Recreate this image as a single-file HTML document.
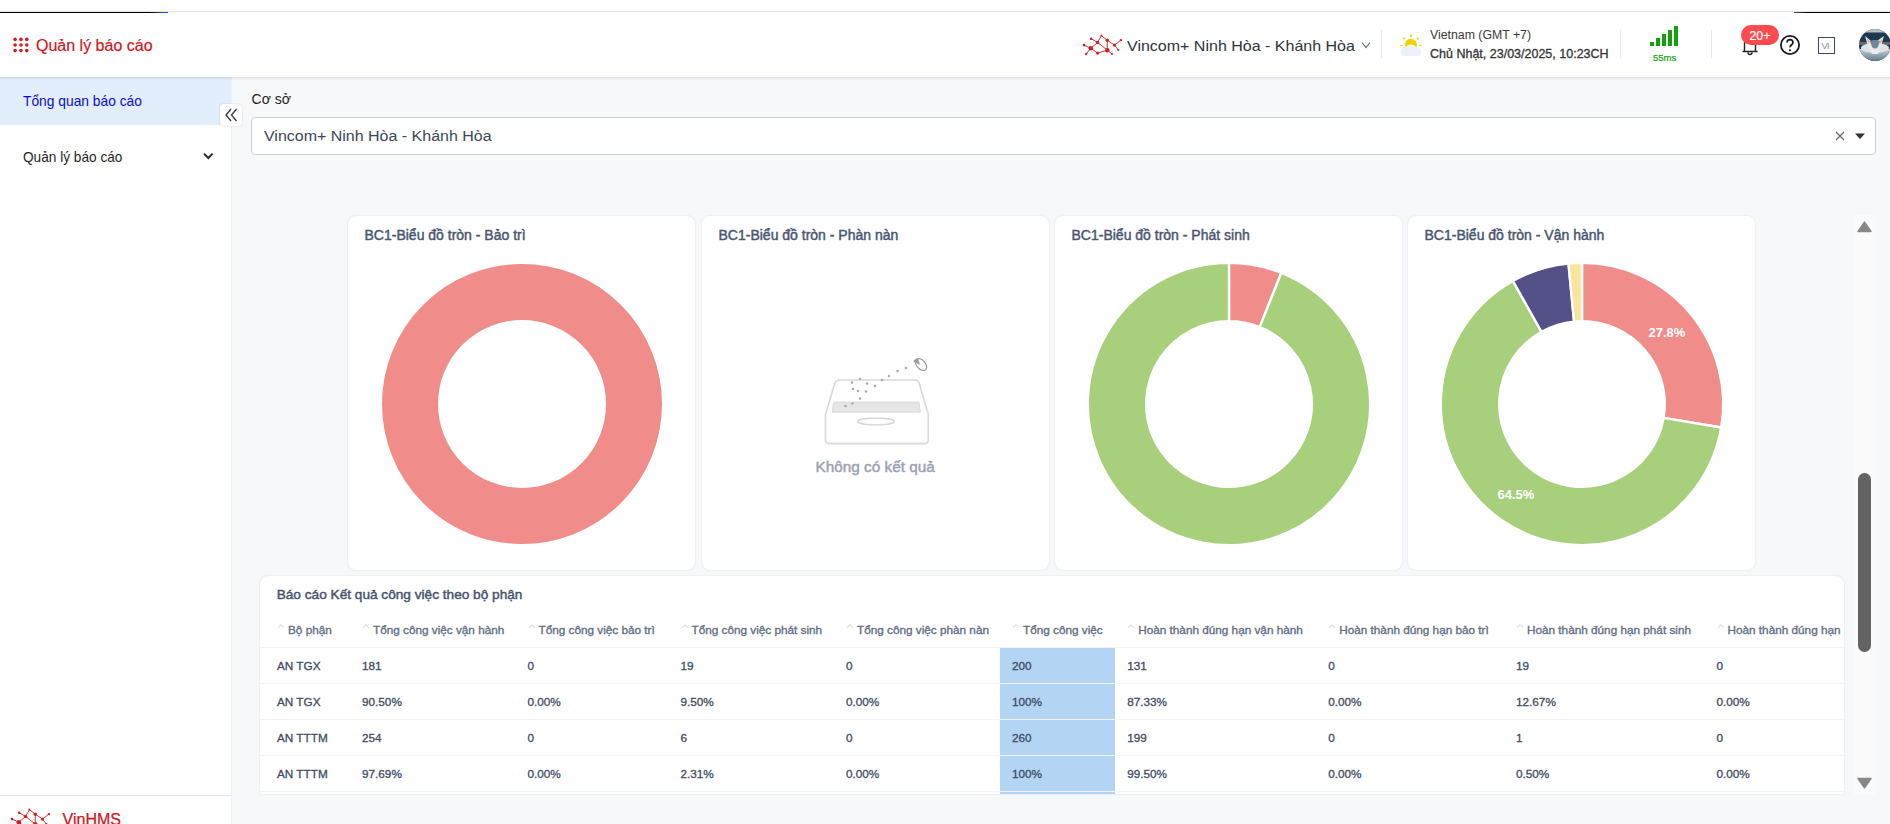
<!DOCTYPE html>
<html><head><meta charset="utf-8">
<style>
*{box-sizing:border-box;margin:0;padding:0}
html,body{width:1890px;height:824px;overflow:hidden;background:#f7f8fa;font-family:"Liberation Sans",sans-serif;position:relative}
.a{position:absolute;white-space:nowrap}
.t{position:absolute;white-space:nowrap;line-height:1}
</style></head><body>

<!-- top strip -->
<div class="a" style="left:0;top:0;width:1890px;height:13px;background:#fff"></div>
<div class="a" style="left:0;top:11.2px;width:1890px;height:1.3px;background:#e3e4e3"></div>
<div class="a" style="left:0;top:11.6px;width:168px;height:1.6px;background:linear-gradient(90deg,#000 0,#000 148px,#444 161px,#1556e0 162px,#1556e0 168px)"></div>
<div class="a" style="left:1794px;top:12px;width:96px;height:1.5px;background:linear-gradient(90deg,#555 0,#000 14px)"></div>

<!-- header -->
<div id="header" class="a" style="left:0;top:13px;width:1890px;height:64px;background:#fff"></div>


<!-- header content -->
<svg class="a" style="left:0;top:0" width="40" height="70" viewBox="0 0 40 70">
<g fill="#d11a1f">
<circle cx="15.1" cy="39.4" r="1.8"/><circle cx="21" cy="39.4" r="1.8"/><circle cx="26.8" cy="39.4" r="1.8"/>
<circle cx="15.1" cy="45" r="1.8"/><circle cx="21" cy="45" r="1.8"/><circle cx="26.8" cy="45" r="1.8"/>
<circle cx="15.1" cy="50.6" r="1.8"/><circle cx="21" cy="50.6" r="1.8"/><circle cx="26.8" cy="50.6" r="1.8"/>
</g></svg>
<div class="t" id="hdrTitle" style="left:36px;top:37.6px;font-size:16px;color:#d0161c;-webkit-text-stroke:0.2px #d0161c">Quản lý báo cáo</div>

<svg class="a" style="left:1082px;top:34px" width="42" height="23" viewBox="0 0 42 23">
<g stroke="#d11f22" stroke-width="0.9" fill="none">
<path d="M2 11.1L8.8 14.3L4.2 20M8.8 14.3L15.6 8.4L9.1 4.7M15.6 8.4L19.4 1.6L25.3 6.2L25.3 16.2L15.6 8.4M8.8 14.3L15.6 19.1L25.3 16.2L30 20M25.3 6.2L32.5 11.1L38.9 6.1M32.5 11.1L36.3 16"/>
</g>
<g fill="#d11f22">
<circle cx="2" cy="11.1" r="1.3"/><circle cx="8.8" cy="14.3" r="2.3"/><circle cx="4.2" cy="20" r="1.2"/>
<circle cx="9.1" cy="4.7" r="1.3"/><circle cx="15.6" cy="8.4" r="1.7"/><circle cx="19.4" cy="1.6" r="1"/>
<circle cx="25.3" cy="6.2" r="1.7"/><circle cx="15.6" cy="19.1" r="1.6"/><circle cx="25.3" cy="16.2" r="2.2"/>
<circle cx="30" cy="20" r="1.1"/><circle cx="32.5" cy="11.1" r="1.6"/><circle cx="38.9" cy="6.1" r="1.2"/>
<circle cx="36.3" cy="16" r="1"/>
</g></svg>
<div class="t" id="hdrSite" style="left:1127px;top:37.6px;font-size:15px;color:#2d3540;transform-origin:0 0;transform:scaleX(1.067)">Vincom+ Ninh Hòa - Khánh Hòa</div>
<svg class="a" style="left:1358px;top:38px" width="16" height="14" viewBox="0 0 16 14"><path d="M4 4.5L8 9.5L12 4.5" stroke="#5a6270" stroke-width="1.1" fill="none"/></svg>
<div class="a" style="left:1381px;top:30px;width:1px;height:28px;background:#e6e8eb"></div>

<svg class="a" style="left:1398px;top:33px" width="26" height="26" viewBox="0 0 26 26">
<g fill="#f3d000">
<circle cx="13" cy="11.8" r="6"/>
<rect x="12" y="1.9" width="2" height="1.9"/>
<circle cx="5.9" cy="5.6" r="1"/><circle cx="20" cy="5.5" r="1"/>
<ellipse cx="3.4" cy="12.5" rx="1.3" ry="0.7"/><ellipse cx="22.6" cy="12.5" rx="1.3" ry="0.7"/>
</g>
<circle cx="13" cy="17.6" r="5.4" fill="#eef2f8" stroke="#fff" stroke-width="1.2"/>
<rect x="2.5" y="14.6" width="21" height="8.3" rx="4.2" fill="#eef2f8"/>
</svg>
<div class="t" id="hdrTz" style="left:1430px;top:29.35px;font-size:12.3px;color:#3a3a3a">Vietnam (GMT +7)</div>
<div class="t" id="hdrDate" style="left:1430px;top:48.3px;font-size:12.5px;-webkit-text-stroke:0.3px #333;color:#333">Chủ Nhật, 23/03/2025, 10:23CH</div>
<div class="a" style="left:1620px;top:30px;width:1px;height:28px;background:#e6e8eb"></div>

<div class="a" style="left:1650px;top:42px;width:4px;height:4px;background:#13a10e"></div>
<div class="a" style="left:1656px;top:38px;width:4px;height:8px;background:#13a10e"></div>
<div class="a" style="left:1662px;top:34px;width:4px;height:12px;background:#13a10e"></div>
<div class="a" style="left:1668px;top:30px;width:4px;height:16px;background:#13a10e"></div>
<div class="a" style="left:1674px;top:26px;width:4px;height:20px;background:#13a10e"></div>
<div class="t" id="hdrMs" style="left:1653px;top:53px;font-size:9.5px;color:#13a10e;-webkit-text-stroke:0.2px #13a10e">55ms</div>
<div class="a" style="left:1711px;top:30px;width:1px;height:28px;background:#e6e8eb"></div>

<svg class="a" style="left:1738px;top:30px" width="24" height="28" viewBox="0 0 24 28">
<path d="M6.5 21.5V12.5A5.5 5.5 0 0 1 17.5 12.5V21.5M4.5 21.5H19.5M10 22.5A2 2 0 0 0 14 22.5" stroke="#222" stroke-width="1.4" fill="none"/>
</svg>
<div class="a" style="left:1741px;top:25px;width:37.5px;height:20px;border-radius:10px;background:#ff4a4f"></div>
<div class="t" id="hdrBadge" style="left:1749.5px;top:29.8px;font-size:12.3px;color:#fff;-webkit-text-stroke:0.2px #fff">20+</div>
<svg class="a" style="left:1778px;top:33px" width="24" height="24" viewBox="0 0 24 24">
<circle cx="12" cy="12" r="9.1" stroke="#1c1c1c" stroke-width="1.8" fill="none"/>
<path d="M9 9.6A3 3 0 0 1 15 9.6C15 11.6 12 12 12 14.3" stroke="#1c1c1c" stroke-width="1.7" fill="none"/>
<circle cx="12" cy="17.3" r="1.1" fill="#1c1c1c"/>
</svg>
<div class="a" style="left:1818px;top:37px;width:17px;height:17px;border:1.4px solid #3d4b5e"></div>
<div class="t" style="left:1821.5px;top:40.5px;font-size:9.5px;color:#8f949b;letter-spacing:-0.8px">VI</div>
<svg class="a" style="left:1859px;top:29px" width="32" height="32" viewBox="0 0 32 32">
<defs><clipPath id="av"><circle cx="16" cy="16" r="16"/></clipPath>
<linearGradient id="avb" x1="0" y1="0" x2="0" y2="1"><stop offset="0" stop-color="#c9d2d8"/><stop offset="1" stop-color="#5f7a8c"/></linearGradient></defs>
<g clip-path="url(#av)">
<rect x="0" y="0" width="32" height="32" fill="#1f3850"/>
<rect x="0" y="0" width="32" height="3.5" fill="#b7bfc3"/>
<rect x="0" y="13" width="32" height="3" fill="#6e6c6a"/>
<rect x="0" y="20" width="32" height="12" fill="url(#avb)"/>
<ellipse cx="16" cy="19" rx="14" ry="5" fill="#dfe3e7"/>
<path d="M6 7L12 12L15 20L18 12L25 7L22 17L19 25H13L9 17Z" fill="#ecebec"/>
<path d="M7.5 9L11 12.5L10 15Z" fill="#e8a48c"/>
<path d="M24 9L20.5 12.5L21.5 15Z" fill="#e8a48c"/>
<path d="M11 12Q16 10 21 12L19 18Q16 21 13 18Z" fill="#6f889a"/>
</g></svg>
<!-- sidebar -->
<div id="sidebar" class="a" style="left:0;top:77px;width:232px;height:747px;background:#fff;border-right:1px solid #eef0f3"></div>


<div class="a" style="left:0;top:77px;width:231px;height:48px;background:#e3eefc"></div>
<div class="t" style="left:23.4px;top:94px;font-size:14.3px;color:#0b0bcf;transform-origin:0 0;transform:scaleX(0.965)">Tổng quan báo cáo</div>
<div class="t" style="left:23.4px;top:149.8px;font-size:14.3px;color:#1f1f1f;transform-origin:0 0;transform:scaleX(0.955)">Quản lý báo cáo</div>
<svg class="a" style="left:200px;top:149px" width="16" height="14" viewBox="0 0 16 14"><path d="M4 4.6L8.3 9L12.6 4.6" stroke="#2a2a2a" stroke-width="2" fill="none"/></svg>
<div class="a" style="left:220px;top:104px;width:22px;height:22px;background:#fff;border-radius:4px;box-shadow:0 0 2px rgba(0,0,0,0.18)"></div>
<svg class="a" style="left:220px;top:104px" width="22" height="22" viewBox="0 0 22 22"><path d="M11 5L6 11L11 17M16.5 5L11.5 11L16.5 17" stroke="#333" stroke-width="1.3" fill="none"/></svg>
<div class="a" style="left:0;top:795px;width:231px;height:1px;background:#dfe5ee"></div>
<svg class="a" style="left:10px;top:808px" width="42" height="23" viewBox="0 0 42 23"><g stroke="#d11f22" stroke-width="0.9" fill="none">
<path d="M2 11.1L8.8 14.3L4.2 20M8.8 14.3L15.6 8.4L9.1 4.7M15.6 8.4L19.4 1.6L25.3 6.2L25.3 16.2L15.6 8.4M8.8 14.3L15.6 19.1L25.3 16.2L30 20M25.3 6.2L32.5 11.1L38.9 6.1M32.5 11.1L36.3 16"/>
</g>
<g fill="#d11f22">
<circle cx="2" cy="11.1" r="1.3"/><circle cx="8.8" cy="14.3" r="2.3"/><circle cx="4.2" cy="20" r="1.2"/>
<circle cx="9.1" cy="4.7" r="1.3"/><circle cx="15.6" cy="8.4" r="1.7"/><circle cx="19.4" cy="1.6" r="1"/>
<circle cx="25.3" cy="6.2" r="1.7"/><circle cx="15.6" cy="19.1" r="1.6"/><circle cx="25.3" cy="16.2" r="2.2"/>
<circle cx="30" cy="20" r="1.1"/><circle cx="32.5" cy="11.1" r="1.6"/><circle cx="38.9" cy="6.1" r="1.2"/>
<circle cx="36.3" cy="16" r="1"/>
</g></svg>
<div class="t" style="left:62.6px;top:811.5px;font-size:16px;color:#d0161c;-webkit-text-stroke:0.25px #d0161c">VinHMS</div>

<div class="a" style="left:0;top:77px;width:1890px;height:4px;background:linear-gradient(rgba(30,40,70,0.10),rgba(30,40,70,0.035) 50%,rgba(30,40,70,0))"></div>
<!-- main -->
<div id="main">
<div class="t" style="left:251.6px;top:91.9px;font-size:14px;color:#222">Cơ sở</div>
<div class="a" style="left:251px;top:117px;width:1625px;height:38px;background:#fff;border:1px solid #c8cfd9;border-radius:4px"></div>
<div class="t" style="left:264.4px;top:128.4px;font-size:15.5px;color:#3c4656;transform-origin:0 0;transform:scaleX(1.031)">Vincom+ Ninh Hòa - Khánh Hòa</div>
<svg class="a" style="left:1834px;top:130px" width="12" height="12" viewBox="0 0 12 12"><path d="M2 2L10 10M10 2L2 10" stroke="#666" stroke-width="1.2"/></svg>
<svg class="a" style="left:1854px;top:132px" width="12" height="8" viewBox="0 0 12 8"><path d="M1 1.5H11L6 7Z" fill="#333"/></svg>
<div class="a" style="left:1853px;top:215px;width:23px;height:579px;background:#fbfbfb"></div>
<div class="a" style="left:1858px;top:473px;width:13px;height:179px;background:#636363;border-radius:6.5px"></div>
<svg class="a" style="left:1856px;top:220px" width="17" height="14" viewBox="0 0 17 14"><path d="M8.5 2.2L15 11.5H2Z" fill="#878787" stroke="#878787" stroke-width="1.5" stroke-linejoin="round"/></svg>
<svg class="a" style="left:1856px;top:776px" width="17" height="14" viewBox="0 0 17 14"><path d="M2 2.5H15L8.5 11.8Z" fill="#878787" stroke="#878787" stroke-width="1.5" stroke-linejoin="round"/></svg>
<div class="a" style="left:348px;top:216px;width:347px;height:354px;background:#fff;border-radius:8px;box-shadow:0 0 2px rgba(20,30,60,0.14)"></div>
<div class="t" style="left:364.5px;top:227.8px;font-size:14px;-webkit-text-stroke:0.45px #4a5670;color:#4a5670">BC1-Biểu đồ tròn - Bảo trì</div>
<div class="a" style="left:702px;top:216px;width:347px;height:354px;background:#fff;border-radius:8px;box-shadow:0 0 2px rgba(20,30,60,0.14)"></div>
<div class="t" style="left:718.5px;top:227.8px;font-size:14px;-webkit-text-stroke:0.45px #4a5670;color:#4a5670">BC1-Biểu đồ tròn - Phàn nàn</div>
<div class="a" style="left:1055px;top:216px;width:347px;height:354px;background:#fff;border-radius:8px;box-shadow:0 0 2px rgba(20,30,60,0.14)"></div>
<div class="t" style="left:1071.5px;top:227.8px;font-size:14px;-webkit-text-stroke:0.45px #4a5670;color:#4a5670">BC1-Biểu đồ tròn - Phát sinh</div>
<div class="a" style="left:1408px;top:216px;width:347px;height:354px;background:#fff;border-radius:8px;box-shadow:0 0 2px rgba(20,30,60,0.14)"></div>
<div class="t" style="left:1424.5px;top:227.8px;font-size:14px;-webkit-text-stroke:0.45px #4a5670;color:#4a5670">BC1-Biểu đồ tròn - Vận hành</div>
<svg class="a" style="left:348px;top:216px" width="347" height="354"><circle cx="174" cy="188" r="112.0" stroke="#f08c8a" stroke-width="56" fill="none"/></svg>
<svg class="a" style="left:1055px;top:216px" width="347" height="354"><path d="M174.00 46.80A141.2 141.2 0 0 1 226.32 56.85L204.68 111.09A82.8 82.8 0 0 0 174.00 105.20Z" fill="#f08c8a" stroke="#fff" stroke-width="2.4" stroke-linejoin="miter"/><path d="M226.32 56.85A141.2 141.2 0 1 1 174.00 46.80L174.00 105.20A82.8 82.8 0 1 0 204.68 111.09Z" fill="#a8d07c" stroke="#fff" stroke-width="2.4" stroke-linejoin="miter"/></svg>
<svg class="a" style="left:1408px;top:216px" width="347" height="354"><path d="M174.00 46.80A141.2 141.2 0 0 1 313.22 211.55L255.64 201.81A82.8 82.8 0 0 0 174.00 105.20Z" fill="#f08c8a" stroke="#fff" stroke-width="2.4" stroke-linejoin="miter"/><path d="M313.22 211.55A141.2 141.2 0 1 1 104.90 64.86L133.48 115.79A82.8 82.8 0 1 0 255.64 201.81Z" fill="#a8d07c" stroke="#fff" stroke-width="2.4" stroke-linejoin="miter"/><path d="M104.90 64.86A141.2 141.2 0 0 1 160.47 47.45L166.06 105.58A82.8 82.8 0 0 0 133.48 115.79Z" fill="#545189" stroke="#fff" stroke-width="2.4" stroke-linejoin="miter"/><path d="M160.47 47.45A141.2 141.2 0 0 1 174.00 46.80L174.00 105.20A82.8 82.8 0 0 0 166.06 105.58Z" fill="#fbe49c" stroke="#fff" stroke-width="2.4" stroke-linejoin="miter"/></svg>
<div class="t" style="left:1648.5px;top:325.5px;font-size:13px;font-weight:700;color:#fff">27.8%</div>
<div class="t" style="left:1497.5px;top:488px;font-size:13px;font-weight:700;color:#fff">64.5%</div>
<svg class="a" style="left:800px;top:340px" width="160" height="120" viewBox="0 0 160 120">
<path d="M25.5 74.5L35 42.5Q36 40 39 40H115Q118 40 119 42.5L128.3 74.5V100Q128.3 103.6 124.7 103.6H29Q25.5 103.6 25.5 100Z" fill="#fff" stroke="#d9d9d9" stroke-width="1.6" stroke-linejoin="round"/>
<path d="M33.5 62H118.8L120.5 72.2H32.3Z" fill="#e6e6e6" stroke="#d6d6d6" stroke-width="0.8"/>
<ellipse cx="75.9" cy="81.5" rx="18.5" ry="3.3" fill="none" stroke="#d6d6d6" stroke-width="1.3"/>
<circle cx="45.5" cy="66" r="1.3" fill="#ababab"/><circle cx="52.5" cy="63.5" r="1.3" fill="#ababab"/><circle cx="60" cy="58.5" r="1.3" fill="#ababab"/><circle cx="58" cy="51" r="1.3" fill="#ababab"/><circle cx="53" cy="49" r="1.3" fill="#ababab"/><circle cx="52" cy="42.5" r="1.3" fill="#ababab"/><circle cx="60" cy="39" r="1.3" fill="#ababab"/><circle cx="67" cy="43.5" r="1.3" fill="#ababab"/><circle cx="66" cy="51.5" r="1.3" fill="#ababab"/><circle cx="75" cy="46" r="1.3" fill="#ababab"/><circle cx="82" cy="40" r="1.3" fill="#ababab"/><circle cx="89" cy="36" r="1.3" fill="#ababab"/><circle cx="97.5" cy="31" r="1.3" fill="#ababab"/><circle cx="106" cy="28" r="1.3" fill="#ababab"/>
<ellipse cx="121" cy="24.5" rx="4.3" ry="7" transform="rotate(-42 121 24.5)" fill="#fff" stroke="#9a9a9a" stroke-width="1.2"/>
<path d="M113.3 21.3Q115 18.6 118.3 19.2L120 25Z" fill="#9a9a9a"/>
</svg>
<div class="t" style="left:815.6px;top:459.4px;font-size:15.3px;-webkit-text-stroke:0.45px #9aa2b3;color:#9aa2b3">Không có kết quả</div>
<div class="a" style="left:260px;top:575.5px;width:1584px;height:218.5px;background:#fff;border-radius:8px 8px 0 0;box-shadow:0 0 2px rgba(20,30,60,0.14)"></div>
<div class="t" style="left:276.7px;top:588.2px;font-size:13.65px;-webkit-text-stroke:0.45px #46536b;color:#46536b">Báo cáo Kết quả công việc theo bộ phận</div>
<div class="a" style="left:260px;top:575.5px;width:1584px;height:218.5px;overflow:hidden"><div class="a" style="left:740px;top:72.5px;width:115px;height:146px;background:#b3d4f3"></div><svg class="a" style="left:17px;top:47px" width="8" height="6" viewBox="0 0 8 6"><path d="M1 4.8L4 1.6L7 4.8" stroke="#cfd3da" stroke-width="1" fill="none"/></svg><div class="t" style="left:28px;top:48.5px;font-size:11.75px;-webkit-text-stroke:0.35px #646e82;color:#646e82">Bộ phận</div><svg class="a" style="left:102px;top:47px" width="8" height="6" viewBox="0 0 8 6"><path d="M1 4.8L4 1.6L7 4.8" stroke="#cfd3da" stroke-width="1" fill="none"/></svg><div class="t" style="left:113px;top:48.5px;font-size:11.75px;-webkit-text-stroke:0.35px #646e82;color:#646e82">Tổng công việc vận hành</div><svg class="a" style="left:267.5px;top:47px" width="8" height="6" viewBox="0 0 8 6"><path d="M1 4.8L4 1.6L7 4.8" stroke="#cfd3da" stroke-width="1" fill="none"/></svg><div class="t" style="left:278.5px;top:48.5px;font-size:11.75px;-webkit-text-stroke:0.35px #646e82;color:#646e82">Tổng công việc bảo trì</div><svg class="a" style="left:420.5px;top:47px" width="8" height="6" viewBox="0 0 8 6"><path d="M1 4.8L4 1.6L7 4.8" stroke="#cfd3da" stroke-width="1" fill="none"/></svg><div class="t" style="left:431.5px;top:48.5px;font-size:11.75px;-webkit-text-stroke:0.35px #646e82;color:#646e82">Tổng công việc phát sinh</div><svg class="a" style="left:586px;top:47px" width="8" height="6" viewBox="0 0 8 6"><path d="M1 4.8L4 1.6L7 4.8" stroke="#cfd3da" stroke-width="1" fill="none"/></svg><div class="t" style="left:597px;top:48.5px;font-size:11.75px;-webkit-text-stroke:0.35px #646e82;color:#646e82">Tổng công việc phàn nàn</div><svg class="a" style="left:752px;top:47px" width="8" height="6" viewBox="0 0 8 6"><path d="M1 4.8L4 1.6L7 4.8" stroke="#cfd3da" stroke-width="1" fill="none"/></svg><div class="t" style="left:763px;top:48.5px;font-size:11.75px;-webkit-text-stroke:0.35px #646e82;color:#646e82">Tổng công việc</div><svg class="a" style="left:867.2px;top:47px" width="8" height="6" viewBox="0 0 8 6"><path d="M1 4.8L4 1.6L7 4.8" stroke="#cfd3da" stroke-width="1" fill="none"/></svg><div class="t" style="left:878.2px;top:48.5px;font-size:11.75px;-webkit-text-stroke:0.35px #646e82;color:#646e82">Hoàn thành đúng hạn vận hành</div><svg class="a" style="left:1068.2px;top:47px" width="8" height="6" viewBox="0 0 8 6"><path d="M1 4.8L4 1.6L7 4.8" stroke="#cfd3da" stroke-width="1" fill="none"/></svg><div class="t" style="left:1079.2px;top:48.5px;font-size:11.75px;-webkit-text-stroke:0.35px #646e82;color:#646e82">Hoàn thành đúng hạn bảo trì</div><svg class="a" style="left:1256px;top:47px" width="8" height="6" viewBox="0 0 8 6"><path d="M1 4.8L4 1.6L7 4.8" stroke="#cfd3da" stroke-width="1" fill="none"/></svg><div class="t" style="left:1267px;top:48.5px;font-size:11.75px;-webkit-text-stroke:0.35px #646e82;color:#646e82">Hoàn thành đúng hạn phát sinh</div><svg class="a" style="left:1456.5px;top:47px" width="8" height="6" viewBox="0 0 8 6"><path d="M1 4.8L4 1.6L7 4.8" stroke="#cfd3da" stroke-width="1" fill="none"/></svg><div class="t" style="left:1467.5px;top:48.5px;font-size:11.75px;-webkit-text-stroke:0.35px #646e82;color:#646e82">Hoàn thành đúng hạn phàn nàn</div><div class="a" style="left:0;top:71.5px;width:1584px;height:1px;background:#f2f3f5"></div><div class="a" style="left:0;top:107.5px;width:1584px;height:1px;background:#f2f3f5"></div><div class="a" style="left:0;top:143.5px;width:1584px;height:1px;background:#f2f3f5"></div><div class="a" style="left:0;top:179.5px;width:1584px;height:1px;background:#f2f3f5"></div><div class="a" style="left:0;top:215.5px;width:1584px;height:1px;background:#f2f3f5"></div><div class="t" style="left:17px;top:84.5px;font-size:11.75px;-webkit-text-stroke:0.3px #404c66;color:#404c66">AN TGX</div><div class="t" style="left:102px;top:84.5px;font-size:11.75px;-webkit-text-stroke:0.3px #404c66;color:#404c66">181</div><div class="t" style="left:267.5px;top:84.5px;font-size:11.75px;-webkit-text-stroke:0.3px #404c66;color:#404c66">0</div><div class="t" style="left:420.5px;top:84.5px;font-size:11.75px;-webkit-text-stroke:0.3px #404c66;color:#404c66">19</div><div class="t" style="left:586px;top:84.5px;font-size:11.75px;-webkit-text-stroke:0.3px #404c66;color:#404c66">0</div><div class="t" style="left:752px;top:84.5px;font-size:11.75px;-webkit-text-stroke:0.3px #404c66;color:#404c66">200</div><div class="t" style="left:867.2px;top:84.5px;font-size:11.75px;-webkit-text-stroke:0.3px #404c66;color:#404c66">131</div><div class="t" style="left:1068.2px;top:84.5px;font-size:11.75px;-webkit-text-stroke:0.3px #404c66;color:#404c66">0</div><div class="t" style="left:1256px;top:84.5px;font-size:11.75px;-webkit-text-stroke:0.3px #404c66;color:#404c66">19</div><div class="t" style="left:1456.5px;top:84.5px;font-size:11.75px;-webkit-text-stroke:0.3px #404c66;color:#404c66">0</div><div class="t" style="left:17px;top:120.5px;font-size:11.75px;-webkit-text-stroke:0.3px #404c66;color:#404c66">AN TGX</div><div class="t" style="left:102px;top:120.5px;font-size:11.75px;-webkit-text-stroke:0.3px #404c66;color:#404c66">90.50%</div><div class="t" style="left:267.5px;top:120.5px;font-size:11.75px;-webkit-text-stroke:0.3px #404c66;color:#404c66">0.00%</div><div class="t" style="left:420.5px;top:120.5px;font-size:11.75px;-webkit-text-stroke:0.3px #404c66;color:#404c66">9.50%</div><div class="t" style="left:586px;top:120.5px;font-size:11.75px;-webkit-text-stroke:0.3px #404c66;color:#404c66">0.00%</div><div class="t" style="left:752px;top:120.5px;font-size:11.75px;-webkit-text-stroke:0.3px #404c66;color:#404c66">100%</div><div class="t" style="left:867.2px;top:120.5px;font-size:11.75px;-webkit-text-stroke:0.3px #404c66;color:#404c66">87.33%</div><div class="t" style="left:1068.2px;top:120.5px;font-size:11.75px;-webkit-text-stroke:0.3px #404c66;color:#404c66">0.00%</div><div class="t" style="left:1256px;top:120.5px;font-size:11.75px;-webkit-text-stroke:0.3px #404c66;color:#404c66">12.67%</div><div class="t" style="left:1456.5px;top:120.5px;font-size:11.75px;-webkit-text-stroke:0.3px #404c66;color:#404c66">0.00%</div><div class="t" style="left:17px;top:156.5px;font-size:11.75px;-webkit-text-stroke:0.3px #404c66;color:#404c66">AN TTTM</div><div class="t" style="left:102px;top:156.5px;font-size:11.75px;-webkit-text-stroke:0.3px #404c66;color:#404c66">254</div><div class="t" style="left:267.5px;top:156.5px;font-size:11.75px;-webkit-text-stroke:0.3px #404c66;color:#404c66">0</div><div class="t" style="left:420.5px;top:156.5px;font-size:11.75px;-webkit-text-stroke:0.3px #404c66;color:#404c66">6</div><div class="t" style="left:586px;top:156.5px;font-size:11.75px;-webkit-text-stroke:0.3px #404c66;color:#404c66">0</div><div class="t" style="left:752px;top:156.5px;font-size:11.75px;-webkit-text-stroke:0.3px #404c66;color:#404c66">260</div><div class="t" style="left:867.2px;top:156.5px;font-size:11.75px;-webkit-text-stroke:0.3px #404c66;color:#404c66">199</div><div class="t" style="left:1068.2px;top:156.5px;font-size:11.75px;-webkit-text-stroke:0.3px #404c66;color:#404c66">0</div><div class="t" style="left:1256px;top:156.5px;font-size:11.75px;-webkit-text-stroke:0.3px #404c66;color:#404c66">1</div><div class="t" style="left:1456.5px;top:156.5px;font-size:11.75px;-webkit-text-stroke:0.3px #404c66;color:#404c66">0</div><div class="t" style="left:17px;top:192.5px;font-size:11.75px;-webkit-text-stroke:0.3px #404c66;color:#404c66">AN TTTM</div><div class="t" style="left:102px;top:192.5px;font-size:11.75px;-webkit-text-stroke:0.3px #404c66;color:#404c66">97.69%</div><div class="t" style="left:267.5px;top:192.5px;font-size:11.75px;-webkit-text-stroke:0.3px #404c66;color:#404c66">0.00%</div><div class="t" style="left:420.5px;top:192.5px;font-size:11.75px;-webkit-text-stroke:0.3px #404c66;color:#404c66">2.31%</div><div class="t" style="left:586px;top:192.5px;font-size:11.75px;-webkit-text-stroke:0.3px #404c66;color:#404c66">0.00%</div><div class="t" style="left:752px;top:192.5px;font-size:11.75px;-webkit-text-stroke:0.3px #404c66;color:#404c66">100%</div><div class="t" style="left:867.2px;top:192.5px;font-size:11.75px;-webkit-text-stroke:0.3px #404c66;color:#404c66">99.50%</div><div class="t" style="left:1068.2px;top:192.5px;font-size:11.75px;-webkit-text-stroke:0.3px #404c66;color:#404c66">0.00%</div><div class="t" style="left:1256px;top:192.5px;font-size:11.75px;-webkit-text-stroke:0.3px #404c66;color:#404c66">0.50%</div><div class="t" style="left:1456.5px;top:192.5px;font-size:11.75px;-webkit-text-stroke:0.3px #404c66;color:#404c66">0.00%</div></div>
</div>
<!-- endmain -->

</body></html>
